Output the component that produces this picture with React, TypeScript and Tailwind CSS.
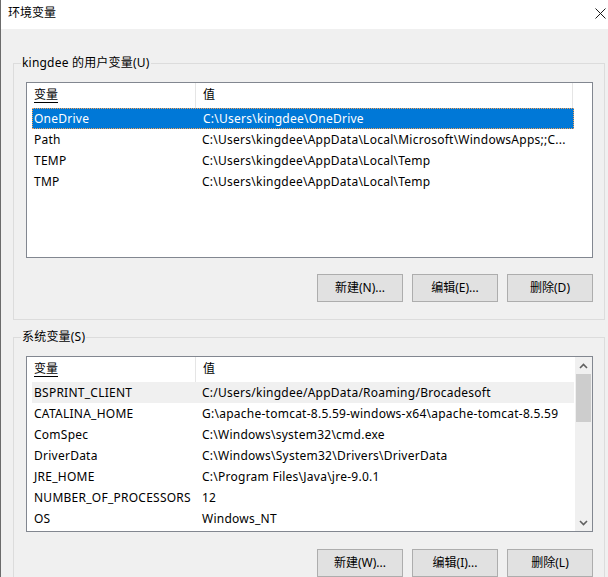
const userVars: [string, string][] = [
  ['OneDrive', String.raw`C:\Users\kingdee\OneDrive`],
  ['Path', String.raw`C:\Users\kingdee\AppData\Local\Microsoft\WindowsApps;;C...`],
  ['TEMP', String.raw`C:\Users\kingdee\AppData\Local\Temp`],
  ['TMP', String.raw`C:\Users\kingdee\AppData\Local\Temp`],
];

const systemVars: [string, string][] = [
  ['BSPRINT_CLIENT', 'C:/Users/kingdee/AppData/Roaming/Brocadesoft'],
  ['CATALINA_HOME', String.raw`G:\apache-tomcat-8.5.59-windows-x64\apache-tomcat-8.5.59`],
  ['ComSpec', String.raw`C:\Windows\system32\cmd.exe`],
  ['DriverData', String.raw`C:\Windows\System32\Drivers\DriverData`],
  ['JRE_HOME', String.raw`C:\Program Files\Java\jre-9.0.1`],
  ['NUMBER_OF_PROCESSORS', '12'],
  ['OS', 'Windows_NT'],
];

function Chevron({ down }: { down?: boolean }) {
  return (
    <svg width="9" height="6" viewBox="0 0 9 6" className={down ? 'rotate-180' : ''}>
      <path d="M1 5 L4.5 1.5 L8 5" fill="none" stroke="#606060" strokeWidth="1.6" />
    </svg>
  );
}

function VarList({ rows, mode, scroll }: { rows: [string, string][]; mode: 'selected' | 'hover'; scroll?: boolean }) {
  return (
    <div className="flex w-[567px] h-[176px] border border-[#828790] bg-white">
      <div className="flex-1 flex flex-col overflow-hidden">
        <div className="flex h-[25px] shrink-0">
          <div className="w-[169px] pl-[7px] pt-[3px] border-r border-[#e5e5e5]">
            <span className="underline underline-offset-[3px]">变量</span>
          </div>
          <div className={`${scroll ? 'flex-1' : 'w-[377px] border-r border-[#e5e5e5]'} pl-[7px] pt-[3px]`}>值</div>
        </div>
        {rows.map(([name, value], i) => {
          const sel = i === 0 && mode === 'selected';
          const hov = i === 0 && mode === 'hover';
          return (
            <div
              key={name}
              className={`ml-[5px] w-[542px] h-[21px] shrink-0 flex items-center whitespace-nowrap tracking-[0.25px] ${
                sel ? 'bg-[#0078d7] text-white border border-dotted border-[#f5a35a]' : hov ? 'bg-[#f0f0f0]' : ''
              }`}
            >
              <div className={`w-[163px] ${sel ? 'pl-[1px]' : 'pl-[2px]'}`}>{name}</div>
              <div className="pl-[7px]">{value}</div>
            </div>
          );
        })}
      </div>
      {scroll && (
        <div className="w-[17px] bg-[#f0f0f0] flex flex-col">
          <div className="h-[17px] flex items-center justify-center">
            <Chevron />
          </div>
          <div className="h-[48px] mx-[1px] bg-[#cdcdcd]" />
          <div className="flex-1" />
          <div className="h-[17px] flex items-center justify-center">
            <Chevron down />
          </div>
        </div>
      )}
    </div>
  );
}

function Btn({ label }: { label: string }) {
  return (
    <button className="w-[86px] h-[28px] bg-[#e1e1e1] border border-[#adadad] flex items-center justify-center">
      {label}
    </button>
  );
}

function Group({ title, children, className }: { title: string; children: React.ReactNode; className?: string }) {
  return (
    <div className={`relative w-[592px] border border-[#dcdcdc] pl-[12px] pt-[18px] pb-[17px] ${className ?? ''}`}>
      <span className="absolute left-[7px] top-[-9px] px-[1px] leading-[16px] bg-[#f0f0f0] tracking-[0.2px]">{title}</span>
      {children}
    </div>
  );
}

export default function App() {
  return (
    <div className="w-[608px] h-[577px] overflow-hidden bg-[#f0f0f0] border-l border-[#6b6b6b] font-['Noto_Sans','Noto_Sans_CJK_SC',sans-serif] text-[12px] text-black">
      <div className="h-[29px] bg-white flex items-start justify-between pl-[7px] pt-[5px]">
        <span className="leading-[16px]">环境变量</span>
        <svg width="11" height="11" viewBox="0 0 11 11" className="mt-[3px] mr-[2px]">
          <path d="M0.5 0.5 L10.5 10.5 M10.5 0.5 L0.5 10.5" stroke="#1a1a1a" strokeWidth="1" />
        </svg>
      </div>
      <div className="pl-[12px] pt-[34px]">
        <Group title="kingdee 的用户变量(U)">
          <VarList rows={userVars} mode="selected" />
          <div className="w-[567px] mt-[16px] flex justify-end gap-[9px]">
            <Btn label="新建(N)..." />
            <Btn label="编辑(E)..." />
            <Btn label="删除(D)" />
          </div>
        </Group>
        <Group title="系统变量(S)" className="mt-[17px]">
          <VarList rows={systemVars} mode="hover" scroll />
          <div className="w-[567px] mt-[17px] flex justify-end gap-[9px]">
            <Btn label="新建(W)..." />
            <Btn label="编辑(I)..." />
            <Btn label="删除(L)" />
          </div>
        </Group>
      </div>
    </div>
  );
}
